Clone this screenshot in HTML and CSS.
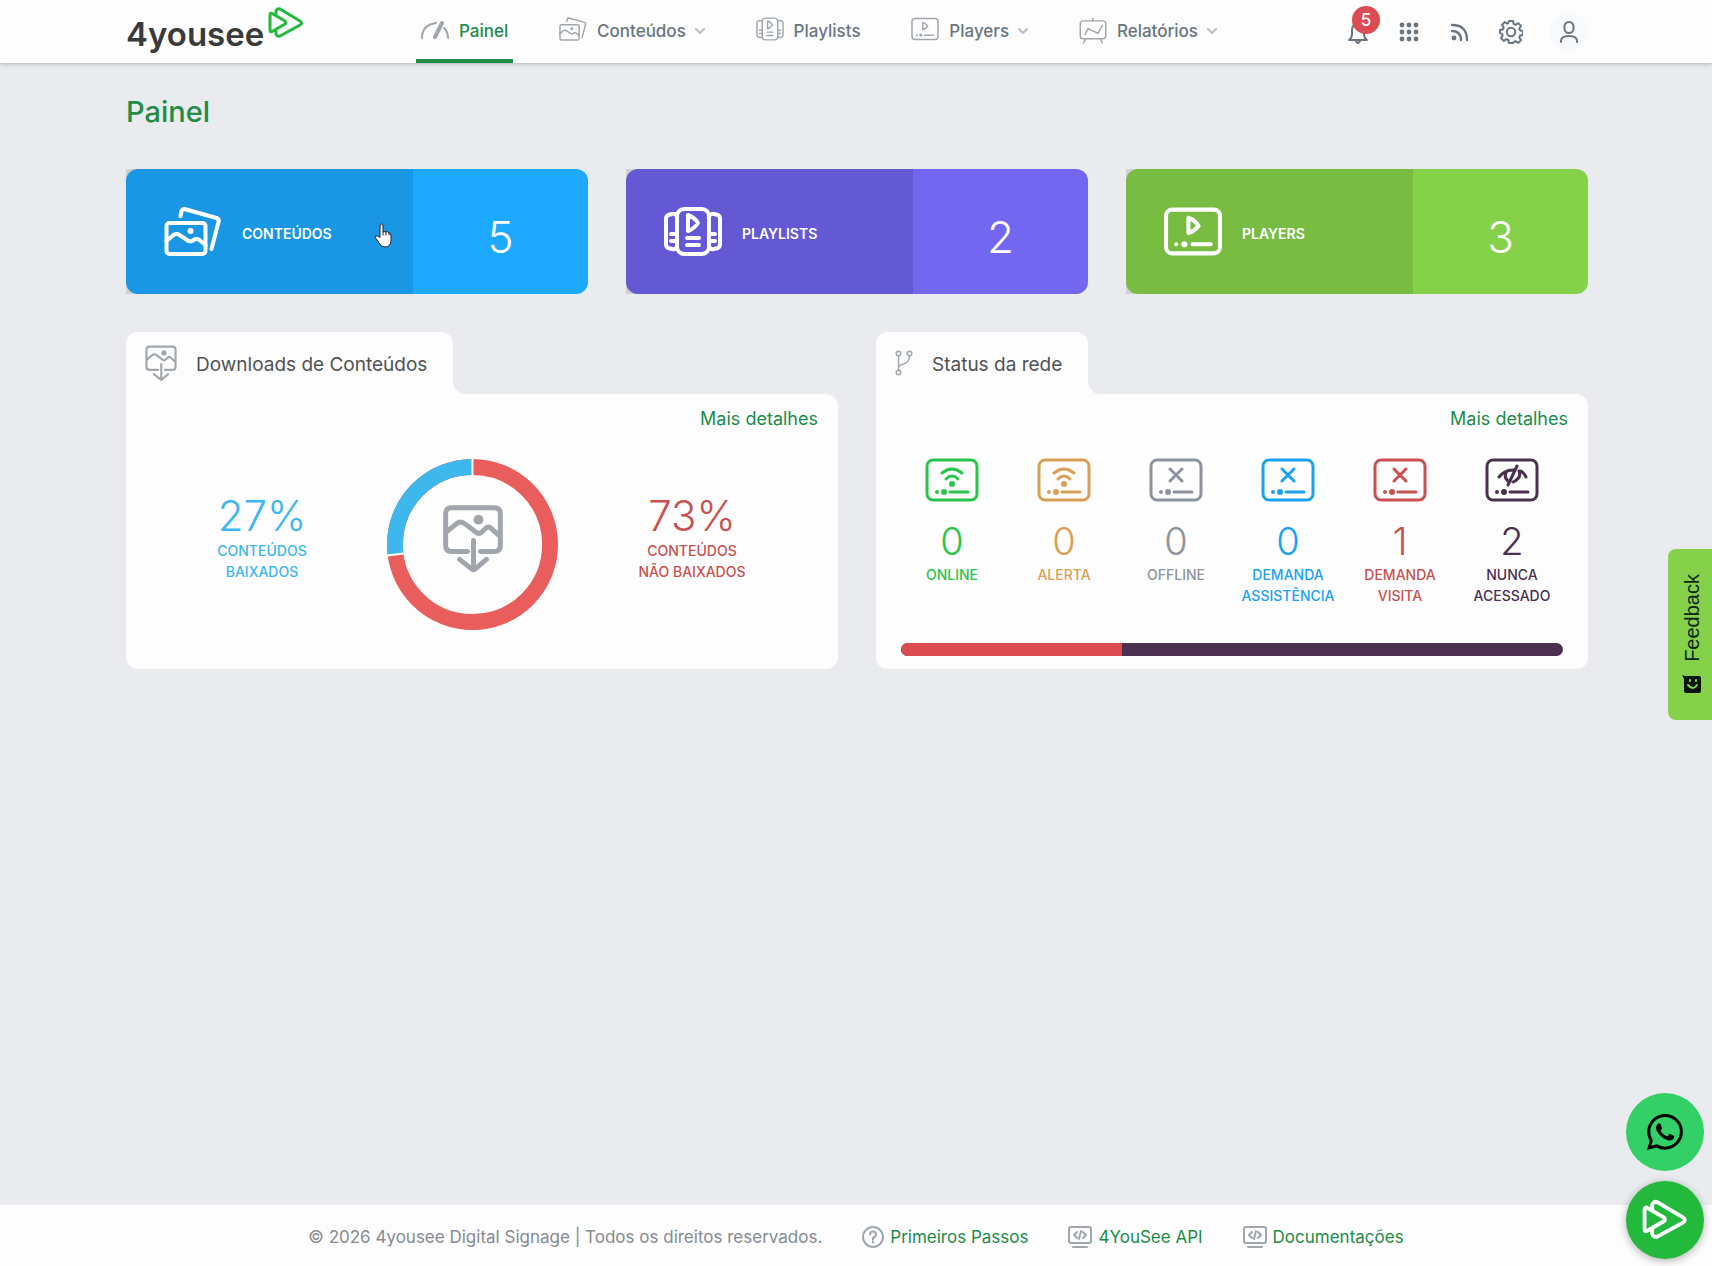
FILE: index.html
```html
<!DOCTYPE html>
<html lang="pt-BR">
<head>
<meta charset="utf-8">
<meta name="viewport" content="width=device-width, initial-scale=1">
<title>Painel - 4yousee</title>
<link rel="stylesheet" href="styles.css">
</head>
<body>
<svg class="sprite" aria-hidden="true">
  <symbol id="i-content" viewBox="0 0 57 49"><rect x="2" y="16" width="39" height="31" rx="3"/><path d="M16 9l1-5q1-2 3-2l32 9q3 1 2 4l-7 27M2 34l7-6q3-2 6 0l9 6q3 1 5-1 3-2 6 0l6 5"/><circle class="fill" cx="26" cy="24" r="3"/></symbol>
  <symbol id="i-playlist" viewBox="0 0 58 49"><rect x="13" y="2" width="32" height="45" rx="7"/><path d="M12 8q-2-2-4-1l-4 1q-2 1-2 4v25q0 3 2 4l4 1q2 1 4-1M46 8q2-2 4-1l4 1q2 1 2 4v25q0 3-2 4l-4 1q-2 1-4-1M7 27h5M7 34h5M46 27h5M46 34h5M24 8v16q6-2 10-8-4-6-10-8zM23 31h12M23 38h12"/></symbol>
  <symbol id="i-player" viewBox="0 0 57 47"><rect x="2" y="2" width="53" height="43" rx="6"/><path d="M24 10v15q6-2 10-7-4-6-10-8zM28 36h18"/><circle class="fill" cx="20" cy="36" r="3"/><circle class="fill" cx="12" cy="36" r="2"/></symbol>
  <symbol id="i-download" viewBox="0 0 61 68"><path d="M25 47H9q-6 0-6-6V9q0-6 6-6h43q6 0 6 6v32q0 6-6 6H38M3 28l11-9q4-3 8 0l12 9q3 2 6-1l3-3q3-3 6 0l9 8M31 36v29M17 55l14 11 13-11"/><circle class="fill" cx="36" cy="15" r="5"/></symbol>
  <symbol id="i-logo" viewBox="0 0 36 32"><path d="M8 7V4q1-3 4-2l20 12q3 2 0 4L12 29q-3 1-4-2v-3M2 8v15q0 3 3 1l12-7q2-1 0-3L5 7Q2 5 2 8z"/></symbol>
  <symbol id="i-chev" viewBox="0 0 10 8"><path d="M1 2l4 4 4-4"/></symbol>
  <symbol id="i-box" viewBox="0 0 54 44"><rect x="2" y="2" width="50" height="40" rx="6"/><path d="M25 34h18"/><circle class="fill" cx="19" cy="34" r="3"/><circle class="fill" cx="12" cy="34" r="2"/></symbol>
  <symbol id="i-wifi" viewBox="0 0 54 44"><use href="#i-box"/><path d="M17 15q10-8 20 0M21 21q6-6 12 0"/><circle class="fill" cx="27" cy="26" r="3"/></symbol>
  <symbol id="i-x" viewBox="0 0 54 44"><use href="#i-box"/><path d="M21 11l12 12M33 11L21 23"/></symbol>
  <symbol id="i-never" viewBox="0 0 54 44"><use href="#i-box"/><path d="M14 19q6-8 16-7M36 13q2 1 5 6M22 13q-4 6 1 10M32 8l-9 19M34 13q3 7-6 11"/></symbol>
  <symbol id="i-code" viewBox="0 0 24 22"><rect x="1" y="1" width="22" height="16" rx="2"/><path d="M5 21h14M9 6L6 9l3 3M15 6l3 3-3 3M13 5l-2 8"/></symbol>
</svg>

<header class="header">
  <a class="logo" href="#" aria-label="4yousee"><span>4yousee</span><svg class="logo-mark"><use href="#i-logo"/></svg></a>
  <nav class="nav">
    <a class="nav-item active" href="#"><svg class="nav-icon" viewBox="0 0 28 18"><path d="M1 16Q1 3 15 1M23 6q4 4 4 10"/><path class="needle" d="M21 1l-7 14"/></svg>Painel</a>
    <a class="nav-item" href="#"><svg class="nav-icon lift"><use href="#i-content"/></svg>Conteúdos<svg class="chev"><use href="#i-chev"/></svg></a>
    <a class="nav-item" href="#"><svg class="nav-icon lift"><use href="#i-playlist"/></svg>Playlists</a>
    <a class="nav-item" href="#"><svg class="nav-icon lift"><use href="#i-player"/></svg>Players<svg class="chev"><use href="#i-chev"/></svg></a>
    <a class="nav-item" href="#"><svg class="nav-icon" viewBox="0 0 57 54"><path d="M28 1v5M13 44l-4 8M44 44l4 8M12 34l6-12 21 10 9-17"/><rect x="2" y="6" width="53" height="37" rx="6"/></svg>Relatórios<svg class="chev"><use href="#i-chev"/></svg></a>
  </nav>
  <div class="tools">
    <button class="tool" aria-label="Notificações"><svg width="20" height="24" viewBox="0 0 20 24"><path d="M1 20h18q-3-2-3-6v-4q0-6-6-6t-6 6v4q0 4-3 6zM8 21q2 4 4 0"/></svg><span class="badge">5</span></button>
    <button class="tool" aria-label="Aplicativos"><svg class="solid" width="20" height="20" viewBox="0 0 20 20"><circle cx="3" cy="3" r="2.400"/><circle cx="10" cy="3" r="2.400"/><circle cx="17" cy="3" r="2.400"/><circle cx="3" cy="10" r="2.400"/><circle cx="10" cy="10" r="2.400"/><circle cx="17" cy="10" r="2.400"/><circle cx="3" cy="17" r="2.400"/><circle cx="10" cy="17" r="2.400"/><circle cx="17" cy="17" r="2.400"/></svg></button>
    <button class="tool" aria-label="Novidades"><svg class="rss" width="18" height="18" viewBox="0 0 18 18"><path d="M1 2q15 0 15 15M1 8q9 0 9 9"/><circle class="fill" cx="3" cy="15" r="2.400"/></svg></button>
    <button class="tool" aria-label="Configurações"><svg width="24" height="24" viewBox="0 0 24 24"><circle cx="12" cy="12" r="4.200"/><path d="M10 1h4l.7 3 1.900.8 2.600-1.700 2.800 2.800-1.700 2.600.8 1.900 2.900.6v4l-2.900.6-.8 1.900 1.700 2.600-2.800 2.800-2.600-1.700-1.900.8L14 23h-4l-.7-3-1.900-.8-2.600 1.700L2 18.100l1.700-2.600-.8-1.900L1 13V10l2.900-.6.8-1.900L3 4.900 5.800 2l2.600 1.700L9.300 3z"/></svg></button>
    <button class="tool avatar" aria-label="Conta"><svg width="20" height="22" viewBox="0 0 20 22"><rect x="5.500" y="1" width="9" height="11" rx="4.500"/><path d="M2 21v-1q0-5 8-5t8 5v1"/></svg></button>
  </div>
</header>

<main class="main">
  <h1 class="title">Painel</h1>
  <section class="cards">
    <a class="card blue" href="#"><span class="card-label"><svg class="card-icon"><use href="#i-content"/></svg>CONTEÚDOS</span><span class="card-value">5</span>
      <svg class="pointer" viewBox="0 0 18 25"><path d="M6 14V3q0-2 1.500-2T9 3v6q2-1 3 0 2-1 3 1 2 0 2 2v5q0 7-6 7-4 0-6-4l-4-6q0-2 2-1z"/><path d="M9 9v3M12 9v3M15 10v2"/></svg></a>
    <a class="card purple" href="#"><span class="card-label"><svg class="card-icon"><use href="#i-playlist"/></svg>PLAYLISTS</span><span class="card-value">2</span></a>
    <a class="card green" href="#"><span class="card-label"><svg class="card-icon"><use href="#i-player"/></svg>PLAYERS</span><span class="card-value">3</span></a>
  </section>

  <div class="panels">
    <section class="panel">
      <h2 class="tab tab-wide"><svg class="tab-icon"><use href="#i-download"/></svg>Downloads de Conteúdos</h2>
      <div class="panel-body">
        <a class="more" href="#">Mais detalhes</a>
        <div class="downloads">
          <p class="share c-sky"><span class="share-value">27%</span>CONTEÚDOS<br>BAIXADOS</p>
          <svg class="donut" viewBox="0 0 172 172">
            <circle class="ring-red" cx="86" cy="86" r="78"/>
            <circle class="ring-blue" cx="86" cy="86" r="78" pathLength="100" stroke-dasharray="27 73" stroke-dashoffset="27" transform="rotate(-90 86 86)"/>
            <path class="ring-gap" d="M86 0v17M0 97l17-2"/>
            <svg class="donut-icon" x="56" y="46" width="61" height="68"><use href="#i-download"/></svg>
          </svg>
          <p class="share c-red"><span class="share-value">73%</span>CONTEÚDOS<br>NÃO BAIXADOS</p>
        </div>
      </div>
    </section>

    <section class="panel">
      <h2 class="tab tab-narrow"><svg class="tab-icon fork" viewBox="0 0 18 26"><circle cx="3.500" cy="3.500" r="2.300"/><circle cx="14.500" cy="3.500" r="2.300"/><circle cx="3.500" cy="22.500" r="2.300"/><path d="M3.500 6v14M14.500 6q0 6-6 8-5 1-5 4"/></svg>Status da rede</h2>
      <div class="panel-body">
        <a class="more" href="#">Mais detalhes</a>
        <ul class="statuses">
          <li class="status c-green"><svg class="status-icon"><use href="#i-wifi"/></svg><span class="status-value">0</span>ONLINE</li>
          <li class="status c-orange"><svg class="status-icon"><use href="#i-wifi"/></svg><span class="status-value">0</span>ALERTA</li>
          <li class="status c-grey"><svg class="status-icon"><use href="#i-x"/></svg><span class="status-value">0</span>OFFLINE</li>
          <li class="status c-blue"><svg class="status-icon"><use href="#i-x"/></svg><span class="status-value">0</span>DEMANDA<br>ASSISTÊNCIA</li>
          <li class="status c-red"><svg class="status-icon"><use href="#i-x"/></svg><span class="status-value">1</span>DEMANDA<br>VISITA</li>
          <li class="status c-plum"><svg class="status-icon"><use href="#i-never"/></svg><span class="status-value">2</span>NUNCA<br>ACESSADO</li>
        </ul>
        <div class="bar"><span class="bar-red" style="width:33.4%"></span></div>
      </div>
    </section>
  </div>
</main>

<footer class="footer">
  <span>© 2026 4yousee Digital Signage | Todos os direitos reservados.</span>
  <a class="foot-link" href="#"><svg width="22" height="22" viewBox="0 0 22 22"><circle cx="11" cy="11" r="10"/><path d="M8 8.500q0-3 3-3t3 3q0 2-3 3.500v1.500M11 15.500v1"/></svg>Primeiros Passos</a>
  <a class="foot-link" href="#"><svg width="24" height="22"><use href="#i-code"/></svg>4YouSee API</a>
  <a class="foot-link" href="#"><svg width="24" height="22"><use href="#i-code"/></svg>Documentações</a>
</footer>

<button class="feedback"><svg width="20" height="20" viewBox="0 0 20 20"><path d="M0 0l3 1h14q2 0 2 2v13q0 2-2 2H4q-2 0-2-2V4z"/><path class="smile" d="M8 5v1M14 5v1M6 10q5 6 9 0"/></svg><span>Feedback</span></button>
<div class="floating">
  <a class="round whatsapp" href="#" aria-label="WhatsApp"><svg width="36" height="36" viewBox="0 0 24 24"><path d="M17.472 14.382c-.297-.149-1.758-.867-2.030-.967-.273-.099-.471-.148-.67.150-.197.297-.767.966-.94 1.164-.173.199-.347.223-.644.075-.297-.15-1.255-.463-2.390-1.475-.883-.788-1.480-1.761-1.653-2.059-.173-.297-.018-.458.130-.606.134-.133.298-.347.446-.52.149-.174.198-.298.298-.497.099-.198.050-.371-.025-.52-.075-.149-.669-1.612-.916-2.207-.242-.579-.487-.5-.669-.51-.173-.008-.371-.01-.57-.01-.198 0-.52.074-.792.372-.272.297-1.040 1.016-1.040 2.479 0 1.462 1.065 2.875 1.213 3.074.149.198 2.096 3.200 5.077 4.487.709.306 1.262.489 1.694.625.712.227 1.360.195 1.871.118.571-.085 1.758-.719 2.006-1.413.248-.694.248-1.289.173-1.413-.074-.124-.272-.198-.57-.347M12.050 21.785h-.004a9.870 9.870 0 0 1-5.031-1.378l-.361-.214-3.741.982.998-3.648-.235-.374a9.860 9.860 0 0 1-1.510-5.260c.001-5.450 4.436-9.884 9.888-9.884a9.890 9.890 0 0 1 9.884 9.892c-.003 5.450-4.437 9.884-9.888 9.884m8.413-18.297A11.815 11.815 0 0 0 12.050 0C5.495 0 .160 5.335.157 11.892c0 2.096.547 4.142 1.588 5.945L.057 24l6.305-1.654a11.882 11.882 0 0 0 5.683 1.448h.005c6.554 0 11.890-5.335 11.893-11.893a11.821 11.821 0 0 0-3.480-8.413z"/></svg></a>
  <a class="round brand" href="#" aria-label="Ajuda 4yousee"><svg width="46" height="42"><use href="#i-logo"/></svg></a>
</div>
</body>
</html>
```
FILE: styles.css
```css
* { box-sizing: border-box; }
body {
  margin: 0;
  min-height: 100vh;
  display: flex;
  flex-direction: column;
  background: #e9ebee;
  color: #6b757e;
  font: 17px/24px Inter, "Open Sans", sans-serif;
}
a { color: inherit; text-decoration: none; }
button { font: inherit; color: inherit; border: 0; background: none; padding: 0; }
h1, h2, p, ul { margin: 0; padding: 0; }
svg { fill: none; stroke: currentColor; stroke-width: 2; stroke-linecap: round; stroke-linejoin: round; flex: none; }
.fill { fill: currentColor; stroke: none; }
.sprite { position: absolute; width: 0; height: 0; }

.header {
  display: flex;
  height: 63px;
  padding: 0 124px 0 126px;
  background: #fdfdfe;
  box-shadow: 0 1px 4px rgba(0, 0, 0, .25);
}
.logo { display: flex; width: 290px; gap: 4px; color: #3a3a3a; font-size: 33px; font-weight: 600; line-height: 68px; }
.logo-mark { width: 36px; height: 32px; margin-top: 7px; color: #22b93d; stroke-width: 3; }
.nav { display: flex; flex: 0 1 806px; justify-content: space-between; }
.nav-item { display: flex; align-items: center; padding: 2px 5px 0; border-bottom: 4px solid transparent; font-weight: 500; }
.nav-icon { width: 28px; height: 26px; margin-right: 10px; color: #a0a6ac; stroke-width: 3; }
.nav-icon.lift { margin-bottom: 4px; }
.active { color: #218c48; border-color: #218c48; }
.active .nav-icon { stroke-width: 2; }
.needle { stroke-width: 4; }
.chev { width: 10px; height: 8px; margin-left: 9px; color: #b9bec3; }
.tools { display: flex; align-items: center; gap: 13px; margin-left: auto; }
.tool { position: relative; display: flex; align-items: center; justify-content: center; width: 38px; height: 38px; }
.tool svg { stroke-width: 2; }
.tool .solid { fill: currentColor; stroke: none; }
.tool .rss { stroke-width: 2.400; }
.tool .fill { stroke: none; }
.avatar { margin-left: 7px; border-radius: 50%; background: #f8f9fb; }
.badge { position: absolute; left: 13px; top: -7px; width: 28px; height: 28px; border-radius: 50%; background: #dd4b52; color: #fff; line-height: 28px; font-weight: 500; }

.main { flex: 1; padding: 33px 124px 40px 126px; }
.title { margin-bottom: 41px; color: #218c48; font-size: 29px; line-height: 32px; font-weight: 500; }
.cards { display: grid; grid-template-columns: repeat(3, 1fr); gap: 38px; margin-bottom: 38px; }
.card { position: relative; display: grid; grid-template-columns: 287fr 175fr; height: 125px; border-radius: 0 12px 12px 0; background: #cfd1d4; color: #fff; }
.card-label { display: flex; align-items: center; gap: 20px; padding-left: 38px; padding-top: 4px; border-radius: 12px 0 0 12px; font-size: 14px; font-weight: 600; }
.card-icon { width: 58px; height: 49px; margin-bottom: 4px; stroke-width: 4; }
.card-value { padding-top: 12px; border-radius: 0 12px 12px 0; text-align: center; font-size: 44px; line-height: 113px; font-weight: 300; }
.blue .card-label { background: #1a97e4; }
.blue .card-value { background: #1ca9ff; }
.purple .card-label { background: #6459d5; }
.purple .card-value { background: #7366f0; }
.green .card-label { background: #78bd42; }
.green .card-value { background: #85d24a; }
.pointer { position: absolute; left: 248px; top: 54px; width: 18px; height: 25px; fill: #fff; stroke: #223; stroke-width: 1; }

.panels { display: grid; grid-template-columns: repeat(2, 1fr); gap: 38px; }
.panel { display: flex; flex-direction: column; align-items: flex-start; }
.tab { position: relative; display: flex; align-items: center; height: 62px; padding: 4px 0 0 18px; border-radius: 12px 12px 0 0; background: #fdfdfe; color: #505255; font-size: 19px; font-weight: 400; }
.tab::after { content: ""; position: absolute; left: 100%; bottom: 0; width: 12px; height: 12px; background: radial-gradient(circle at 100% 0, transparent 12px, #fdfdfe 12px); }
.tab-wide { width: 327px; }
.tab-narrow { width: 212px; }
.tab-icon { width: 34px; height: 36px; margin: 0 18px 4px 0; color: #a0a6ac; stroke-width: 4; }
.fork { width: 20px; height: 26px; stroke-width: 1.500; }
.panel-body { width: 100%; height: 275px; padding: 13px 20px; border-radius: 0 12px 12px 12px; background: #fdfdfe; }
.more { display: block; text-align: right; color: #218c48; font-size: 18px; line-height: 24px; }
.downloads { display: grid; grid-template-columns: 232fr 188fr 252fr; justify-items: center; margin-top: 28px; }
.share { padding-top: 33px; text-align: center; font-size: 14px; line-height: 21px; font-weight: 500; }
.share-value { display: block; font-size: 42px; line-height: 48px; font-weight: 300; }
.donut { width: 171px; height: 171px; }
.ring-red { stroke: #e95d5d; stroke-width: 16; }
.ring-blue { stroke: #3db7ec; stroke-width: 16; stroke-linecap: butt; }
.ring-gap { stroke: #fdfdfe; stroke-width: 2; }
.donut-icon { color: #a0a6ac; stroke-width: 5; }
.statuses { display: grid; grid-template-columns: repeat(6, 1fr); height: 185px; padding-top: 27px; list-style: none; }
.status { display: flex; flex-direction: column; align-items: center; text-align: center; font-size: 14px; line-height: 21px; font-weight: 500; }
.status-icon { width: 54px; height: 44px; stroke-width: 3; }
.status-value { margin-top: 16px; font-size: 38px; line-height: 46px; font-weight: 300; }
.c-sky { color: #3db7ec; }
.c-red { color: #c9514f; }
.c-green { color: #2bc44a; }
.c-orange { color: #d9a055; }
.c-grey { color: #8d939b; }
.c-blue { color: #1ba1f2; }
.c-plum { color: #4b3050; }
.bar { height: 13px; margin: 27px 5px 0; border-radius: 7px; background: #4b3050; overflow: hidden; }
.bar-red { display: block; height: 100%; background: #db4c52; }

.footer { display: flex; align-items: center; justify-content: center; min-height: 61px; background: #fdfdfe; color: #858b91; gap: 40px; padding-top: 2px; }
.foot-link { display: flex; align-items: center; gap: 6px; color: #218c48; }
.foot-link svg { color: #a0a6ac; }

.feedback { position: fixed; right: 0; top: 549px; width: 44px; height: 171px; display: flex; flex-direction: column-reverse; align-items: center; justify-content: center; gap: 13px; border-radius: 8px 0 0 8px; background: #85d24a; color: #0c2418; font: 20px/24px "Liberation Sans", sans-serif; padding-left: 4px; }
.feedback span { writing-mode: vertical-rl; transform: rotate(180deg); }
.feedback svg { fill: #07140c; stroke: none; }
.feedback .smile { fill: none; stroke: #85d24a; stroke-width: 2; }
.floating { position: fixed; right: 8px; bottom: 7px; display: grid; gap: 10px; }
.round { display: flex; align-items: center; justify-content: center; width: 78px; height: 78px; border-radius: 50%; color: #fff; }
.whatsapp { background: #32d067; }
.whatsapp svg { fill: #000; stroke: none; }
.brand { background: #22b93d; box-shadow: 0 2px 8px rgba(0, 0, 0, .3); }
.brand svg { stroke-width: 3; }
```
